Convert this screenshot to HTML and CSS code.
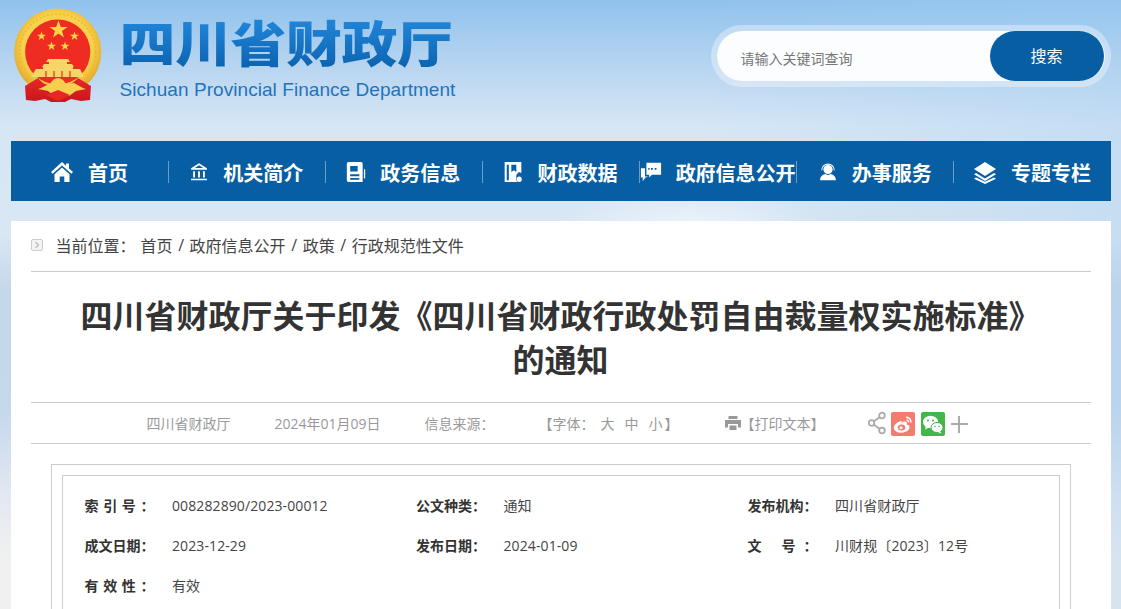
FILE: index.html
```html
<!DOCTYPE html>
<html lang="zh-CN">
<head>
  <meta charset="UTF-8">
  <title>四川省财政厅</title>
  <link rel="stylesheet" href="styles.css">
</head>
<body>
  <div class="wrap">
    <header class="top">
      <div class="logo">
        <svg class="emblem" viewBox="13 8 90 96">
          <defs>
            <radialGradient id="gold" cx="50%" cy="45%" r="55%">
              <stop offset="0.72" stop-color="#f8d24a"/>
              <stop offset="1" stop-color="#e0a52a"/>
            </radialGradient>
            <linearGradient id="drape" x1="0" y1="0" x2="0" y2="1">
              <stop offset="0" stop-color="#e8262a"/>
              <stop offset="1" stop-color="#c9161c"/>
            </linearGradient>
          </defs>
          <circle cx="57.7" cy="52" r="43.6" fill="url(#gold)"/>
          <circle cx="57.7" cy="52" r="38" fill="none" stroke="#eeb531" stroke-width="1.5" stroke-dasharray="2 2"/>
          <circle cx="57.7" cy="52" r="32.6" fill="#ee2c22"/>
          <polygon fill="#f9d648" points="58.5,20.5 60.8,27 67.5,27 62,31 64,37.5 58.5,33.5 53,37.5 55,31 49.5,27 56.2,27"/>
          <polygon fill="#f9d648" points="41.5,31.5 42.6,34.8 46,34.8 43.3,36.8 44.3,40 41.5,38 38.7,40 39.7,36.8 37,34.8 40.4,34.8"/>
          <polygon fill="#f9d648" points="74.5,31.5 75.6,34.8 79,34.8 76.3,36.8 77.3,40 74.5,38 71.7,40 72.7,36.8 70,34.8 73.4,34.8"/>
          <polygon fill="#f9d648" points="51.5,41.5 52.6,44.8 56,44.8 53.3,46.8 54.3,50 51.5,48 48.7,50 49.7,46.8 47,44.8 50.4,44.8"/>
          <polygon fill="#f9d648" points="65,41.5 66.1,44.8 69.5,44.8 66.8,46.8 67.8,50 65,48 62.2,50 63.2,46.8 60.5,44.8 63.9,44.8"/>
          <path fill="#f7d568" d="M48 59h20l2 3h-3v2h5l2 3H42l2-3h5v-2h-3z"/>
          <path fill="#f7d568" d="M43 67h30v2H43zM36 69h44l4 8H31z"/>
          <path fill="#ee2c22" d="M45 71h2v6h-2zM53 71h2v6h-2zM61 71h2v6h-2zM69 71h2v6h-2z" opacity=".6"/>
          <path fill="url(#drape)" d="M38 78 25 86l1 14 9 1 10-2 6 3h14l6-3 10 2 9-1 1-14-13-8c-4 5-10 8-21 8s-15-3-19-8z"/>
          <path fill="#f7cf4e" d="M50 84c2-4 5-6 8-6s6 2 8 6l8-1 9 5 3 1-10 2-7 5-6-3-5-1-4 4-6-5-10-2 3-1 8-4z"/>
          <path fill="#e8262a" d="M46 95l12-5 12 5-12 6z"/>
        </svg>
        <div class="logo-text">
          <div class="logo-cn">四川省财政厅</div>
          <div class="logo-en">Sichuan Provincial Finance Department</div>
        </div>
      </div>
      <div class="search">
        <span class="search-hint">请输入关键词查询</span>
        <span class="search-btn">搜索</span>
      </div>
    </header>

    <nav class="nav">
      <a class="nav-item">
        <svg class="nav-icon icon-lg" viewBox="0 0 24 24"><path d="M12 2 1 12l1.600 1.800L12 5.400l9.400 8.400L23 12l-4-3.600V3.500h-3v2.200z"/><path d="M12 7.600 4.500 14.200V22h5.200v-5.500h4.600V22h5.200v-7.800z"/></svg>
        首页
      </a>
      <a class="nav-item">
        <svg class="nav-icon" viewBox="0 0 24 24"><path d="M12 1.500 2.500 7.500v1.800h19V7.500zm0 2.400 5 3.400H7zM5 11h2.200v7.500H5zM10.900 11h2.200v7.500h-2.200zM16.800 11H19v7.500h-2.200zM2.500 20h19v2h-19z"/></svg>
        机关简介
      </a>
      <a class="nav-item">
        <svg class="nav-icon" viewBox="0 0 24 24" preserveAspectRatio="none"><path fill-rule="evenodd" d="M1 3a2 2 0 0 1 2-2h15a2 2 0 0 1 2 2v20H3a2 2 0 0 1-2-2zm4 2.500v6h9v-6zm0 9v2h11v-2zm0 4v2h11v-2z"/><path d="M21.500 9H23v10h-1.500z"/></svg>
        政务信息
      </a>
      <a class="nav-item">
        <svg class="nav-icon" viewBox="0 0 24 24" preserveAspectRatio="none"><path fill-rule="evenodd" d="M2 1h20v12l-3-1-3 3v6l1.500 2H2zm2.500 3v17h2.500V4zm5.500 0v8l3-2 3 2V4z"/><circle cx="19.500" cy="20" r="3"/></svg>
        财政数据
      </a>
      <a class="nav-item">
        <svg class="nav-icon icon-md" viewBox="0 0 24 24"><path fill-rule="evenodd" d="M7 2h16v13H13l-3 3v-3H7zm5 5.500v2h2v-2zm4 0v2h2v-2zm-7 0v2h1.500v-2z"/><path d="M1 8h4.500v9H9l-3 1-3 4v-4H1z"/></svg>
        <span class="nav-clip">政府信息公开</span>
      </a>
      <a class="nav-item">
        <svg class="nav-icon" viewBox="0 0 24 24"><circle cx="12" cy="9" r="5.500"/><path fill="none" stroke="#fff" stroke-width="1.300" d="M4.500 10c0-10 15-10 15 0"/><path d="M2.500 22c0-5 4-7 6.500-7.500l3 1.500 3-1.500c2.500.5 6.500 2.500 6.500 7.500z"/></svg>
        办事服务
      </a>
      <a class="nav-item">
        <svg class="nav-icon icon-lg" viewBox="0 0 24 24"><path d="M12 2 1 9l11 7 11-7z"/><path d="m3 13-2 1.300L12 21l11-6.700L21 13l-9 5.500zM3 17.500l-2 1.300L12 24l11-5.200-2-1.300-9 4.200z"/></svg>
        专题专栏
      </a>
    </nav>

    <main class="content">
      <div class="crumb">
        <svg class="crumb-icon" viewBox="0 0 12 12"><rect x=".5" y=".5" width="11" height="11" rx="1.500" fill="#f4f4f4" stroke="#ccc"/><path d="m4.500 3 3 3-3 3" fill="none" stroke="#bbb" stroke-width="1.300"/></svg>
        <span class="crumb-label">当前位置：</span>
        <a>首页</a><i class="crumb-sep">/</i><a>政府信息公开</a><i class="crumb-sep">/</i><a>政策</a><i class="crumb-sep">/</i><a>行政规范性文件</a>
      </div>

      <h1 class="title">四川省财政厅关于印发《四川省财政行政处罚自由裁量权实施标准》<br>的通知</h1>

      <div class="meta">
        <span class="m-org">四川省财政厅</span>
        <span class="m-date">2024年01月09日</span>
        <span class="m-src">信息来源：</span>
        <span class="m-font">【字体：<a class="f-big">大</a><a class="f-size">中</a><a class="f-size">小</a><a class="f-end">】</a></span>
        <svg class="m-print" viewBox="0 0 16 16"><path d="M3.500 1h9v3h-9zM0 5h16v7.500h-3V9H3v3.500H0zM4.500 10.500h7V15h-7z" fill="#999"/></svg>
        <span>【打印文本】</span>
        <svg class="m-share" viewBox="0 0 18 24"><g fill="none" stroke="#aaa" stroke-width="1.800"><circle cx="14" cy="4.500" r="2.800"/><circle cx="3.500" cy="12" r="2.800"/><circle cx="14" cy="19.500" r="2.800"/><path d="m6 10.300 5.500-4M6 13.700l5.500 4"/></g></svg>
        <span class="m-weibo">
          <svg viewBox="0 0 24 24"><path fill="#fff" d="M10 9c-4 1-8 4.500-7 8 1 3 5 4.500 9.500 3.500 4-1 6.500-3.500 6-5.800-.3-1.400-1.700-1.900-2.700-2.200.7-1.800-.2-3-2-3-1.200 0-2.500.7-3.300.9.300-1.500-.2-2-1-1.400z"/><ellipse cx="10.500" cy="15.500" rx="3.800" ry="3" fill="#f47c6e"/><circle cx="10" cy="15.800" r="1.500" fill="#fff"/><path fill="none" stroke="#fff" stroke-width="1.600" d="M15 5.500c3-.5 5.500 2 4.800 5M15.500 8.300c1.300-.2 2.200.8 2 2"/></svg>
        </span>
        <span class="m-wechat">
          <svg viewBox="0 0 24 24"><ellipse cx="9.500" cy="10" rx="7.500" ry="6.200" fill="#fff"/><path fill="#fff" d="m5 14-1 3.500 4-2z"/><ellipse cx="16" cy="15.500" rx="6" ry="5" fill="#fff" stroke="#43b649"/><path fill="#fff" d="m19 19 1.500 2.500-4-1.500z"/><circle cx="7" cy="8.500" r="1" fill="#43b649"/><circle cx="12" cy="8.500" r="1" fill="#43b649"/><circle cx="14" cy="14.500" r=".8" fill="#43b649"/><circle cx="18" cy="14.500" r=".8" fill="#43b649"/></svg>
        </span>
        <span class="m-plus"></span>
      </div>

      <div class="info-outer">
        <div class="info">
          <div class="info-cell"><span class="info-label">索 引 号 ：</span>008282890/2023-00012</div>
          <div class="info-cell"><span class="info-label">公文种类：</span>通知</div>
          <div class="info-cell"><span class="info-label">发布机构：</span>四川省财政厅</div>
          <div class="info-cell"><span class="info-label">成文日期：</span>2023-12-29</div>
          <div class="info-cell"><span class="info-label">发布日期：</span>2024-01-09</div>
          <div class="info-cell"><span class="info-label">文 号：</span>川财规〔2023〕12号</div>
          <div class="info-cell"><span class="info-label">有 效 性 ：</span>有效</div>
        </div>
      </div>
    </main>
  </div>
</body>
</html>
```

FILE: styles.css
```css
html, body { margin: 0; padding: 0; }
body {
  height: 609px;
  overflow: hidden;
  font-family: "Open Sans", "Noto Sans CJK SC", "Liberation Sans", sans-serif;
  font-size: 14px;
  color: #333;
  background:
    radial-gradient(ellipse 130px 40px at 690px 225px, rgba(240,245,251,.8), rgba(240,245,251,0)),
    linear-gradient(90deg, rgba(165,205,240,0) 700px, rgba(165,205,240,.35) 1121px),
    linear-gradient(180deg, #90c2ed 0, #b4d3f0 60px, #d6e6f5 125px, #d9e7f3 235px, #c5d7ea 290px, #c5d8ec 410px, #e4e9f1 500px, #f0f0f0 560px);
}
a { color: inherit; text-decoration: none; }
i { font-style: normal; }

.wrap { width: 1100px; margin: 0 auto; }

/* header */
.top { height: 141px; display: flex; justify-content: space-between; align-items: flex-start; }
.logo { display: flex; padding: 8px 0 0 2px; }
.emblem { width: 90px; height: 96px; display: block; }
.logo-text { margin-left: 17px; padding-top: 6px; }
.logo-cn {
  font-size: 56px;
  font-weight: 900;
  line-height: 64px;
  letter-spacing: -.5px;
  background: linear-gradient(180deg, #2389dc, #0b62b0);
  -webkit-background-clip: text;
  background-clip: text;
  color: transparent;
  transform: scaleY(.88);
  transform-origin: 0 0;
}
.logo-en {
  font-family: "Liberation Sans", sans-serif;
  font-size: 19px;
  line-height: 22px;
  color: #1e74bb;
  letter-spacing: .06px;
  margin-top: 1px;
}

.search {
  margin-top: 25px;
  width: 388px;
  height: 50px;
  border: 6px solid rgba(255,255,255,.35);
  border-radius: 31px;
  background: #fbfdff;
  background-clip: padding-box;
  display: flex;
  justify-content: space-between;
  align-items: center;
}
.search-hint { padding: 3px 0 0 24px; color: #777; font-size: 14px; }
.search-btn {
  width: 114px;
  height: 50px;
  margin-right: 1px;
  line-height: 50px;
  border-radius: 25px;
  background: #075ea3;
  color: #fff;
  font-size: 16px;
  text-align: center;
}

/* nav */
.nav { display: flex; height: 60px; background: #075ea3; }
.nav-item {
  flex: 1 1 0;
  min-width: 0;
  display: flex;
  align-items: center;
  justify-content: center;
  gap: 14px;
  padding-top: 2px;
  color: #fff;
  font-size: 20px;
  font-weight: 700;
  position: relative;
  white-space: nowrap;
  overflow: hidden;
}
.nav-item + .nav-item::before {
  content: "";
  position: absolute;
  left: 0;
  top: 20px;
  height: 22px;
  width: 1px;
  background: rgba(255,255,255,.4);
}
.nav-icon { width: 20px; height: 22px; fill: #fff; flex: none; }
.icon-md { width: 22px; }
.icon-lg { width: 24px; height: 24px; }
.nav-clip { display: block; width: 120px; overflow: hidden; flex: none; }

/* content */
.content { margin-top: 20px; background: #fff; padding: 0 20px; height: 388px; overflow: hidden; }
.crumb {
  height: 48px;
  padding-bottom: 2px;
  border-bottom: 1px solid #ccc;
  display: flex;
  align-items: center;
  font-size: 16px;
  color: #444;
}
.crumb-icon { width: 12px; height: 12px; margin-right: 13px; }
.crumb-label { margin-right: 5px; }
.crumb-sep { margin: 0 5.6px; }

.title {
  margin: 0;
  padding: 22px 0 20px;
  font-size: 32px;
  line-height: 44px;
  font-weight: 700;
  text-align: center;
  color: #333;
  border-bottom: 1px solid #ccc;
}

.meta {
  height: 40px;
  border-bottom: 1px solid #ccc;
  display: flex;
  align-items: center;
  padding-left: 116px;
  color: #999;
  font-size: 14px;
}
.m-org, .m-date { margin-right: 44px; }
.m-src { margin-right: 44px; }
.m-font { margin-right: 46px; }
.f-big { margin-left: 6px; }
.f-size { margin-left: 10px; }
.f-end { margin-left: 2px; }
.m-print { width: 16px; height: 16px; flex: none; }
.m-share { width: 18px; height: 24px; margin-left: 43px; flex: none; }
.m-weibo, .m-wechat { width: 24px; height: 24px; border-radius: 2px; margin: 2px 0 0 6px; flex: none; }
.m-weibo { margin-left: 5px; background: #f47c6e; }
.m-wechat { background: #43b649; }
.m-weibo svg, .m-wechat svg { display: block; width: 24px; height: 24px; }
.m-plus {
  width: 17px;
  height: 17px;
  margin: 2px 0 0 6px;
  flex: none;
  background:
    linear-gradient(#aaa, #aaa) center / 17px 2px no-repeat,
    linear-gradient(#aaa, #aaa) center / 2px 17px no-repeat;
}

.info-outer { margin: 20px 20px 0; border: 1px solid #ccc; padding: 10px; }
.info {
  border: 1px solid #ccc;
  padding: 9px 0 0 22px;
  min-height: 200px;
  display: grid;
  grid-template-columns: repeat(3, 331.5px);
  grid-auto-rows: 40px;
}
.info-cell { display: flex; align-items: center; color: #444; font-size: 14px; letter-spacing: .1px; }
.info-label {
  width: 70px;
  margin-right: 17.5px;
  font-weight: 700;
  color: #333;
  letter-spacing: 0;
  text-align: justify;
  text-align-last: justify;
}
```
